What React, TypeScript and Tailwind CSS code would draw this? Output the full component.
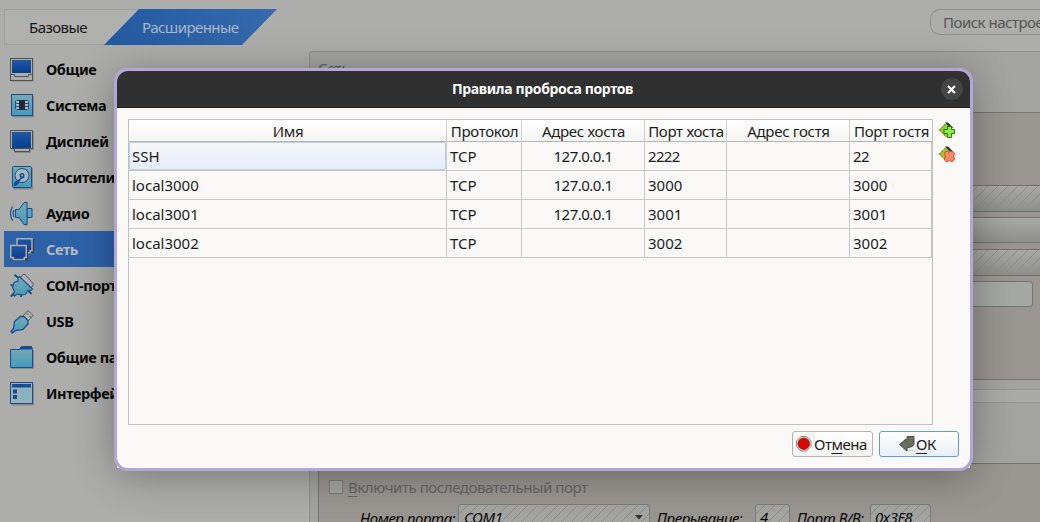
import type { ReactNode } from 'react';

const NAVY = '#174c92';
const SKY = '#58a6bd';

const icons: Record<string, ReactNode> = {
  general: (
    <>
      <rect x="1.5" y="1.5" width="22" height="22" fill="#6f7373" opacity=".6" />
      <rect x=".5" y=".5" width="22" height="22" fill="#adadab" stroke="#4f5252" />
      <rect x="2" y="2" width="19" height="13" fill="url(#screen)" />
      <path d="M1 16.5h3.5v2h14v-2H22" fill="none" stroke="#4f5252" />
    </>
  ),
  system: (
    <>
      <rect x="2.5" y="2" width="21.5" height="21.5" fill="#777b7a" opacity=".7" />
      <rect x="1.5" y=".5" width="21" height="21" fill="url(#sky)" stroke={NAVY} />
      <rect x="5.5" y="6.500" width="13" height="9" rx="1" fill="#adb9bc" stroke={NAVY} />
      <path d="M5 9.500h14M5 12.500h14" stroke={NAVY} />
      <rect x="9" y="6" width="6" height="10" fill="#232834" />
    </>
  ),
  display: (
    <>
      <path d="M1.500 1.500h22.500v18.500h-3v3h-16v-3h-3.500z" fill="#6f7373" opacity=".6" />
      <path d="M.5.5h22v18h-3v3h-15v-3h-4z" fill="#adadab" stroke="#4f5252" />
      <rect x="2" y="2" width="19" height="16" fill="url(#screen)" />
      <path d="M4.500 18.500h15" stroke="#4f5252" />
    </>
  ),
  storage: (
    <>
      <rect x="3.500" y="2" width="19.500" height="21.500" fill="#777b7a" opacity=".7" />
      <rect x="2.500" y=".5" width="19" height="21" rx="1" fill="url(#sky)" stroke={NAVY} />
      <circle cx="12" cy="9.500" r="7" fill="#a6b8bd" stroke={NAVY} />
      <path d="M13 9l1.500 2.500-4 2-2.500 5-3.500 2-1-1.500 1.500-3.500 5-3z" fill={NAVY} />
      <circle cx="12" cy="9.500" r="2.500" fill={NAVY} />
      <circle cx="12" cy="9.500" r="1" fill="#a6b8bd" />
    </>
  ),
  audio: (
    <>
      <path d="M7 7.500l8-7h2v22h-2l-8-7z" transform="translate(1 1)" fill="#777b7a" opacity=".6" />
      <path d="M17 6.500h5v9h-5z" fill={SKY} stroke={NAVY} />
      <path d="M5.500 7.500h3.500l5-7h3v22h-3l-5-7h-3.500z" fill="url(#sky)" stroke={NAVY} />
      <path d="M4 8q-1.500 3.500 0 7M2.500 4.500q-4 7 0 14" fill="none" stroke={NAVY} strokeWidth="1.200" />
    </>
  ),
  network: (
    <>
      <rect x="8.500" y="1" width="15.500" height="14" fill="#333d4a" />
      <path d="M7 .8h15v12h-2v2h-13z" fill="url(#screen)" stroke="#adadab" strokeWidth="1.500" />
      <rect x="2" y="8.500" width="16" height="14" fill="#333d4a" />
      <path d="M.8 7.500h15.500v12h-2v2h-11v-2h-2.500z" fill="url(#screen)" stroke="#adadab" strokeWidth="1.500" />
    </>
  ),
  serial: (
    <>
      <path d="M10 4l3-3.500h2l8 9v2l-3 3.500z" fill="#b3b5b5" stroke="#555" />
      <path d="M8 3.500l1.500-1 13 12.500-1.500 1.500-3-.5-2.500 4.500-4 .5-4-1-3 2-1.500-1.500 1.500-3-2-4 1.500-5 4-1.500z" fill="url(#sky)" stroke={NAVY} strokeWidth="1.100" />
      <path d="M4.500 .8l3.500 3M.5 10.500l3 1.500M11 20v3M18.500 17l3 3M.8 22.500l3-3" stroke={NAVY} strokeWidth="1.800" />
    </>
  ),
  usb: (
    <>
      <path d="M13 6l5-5.500 5 5-5 5.500z" fill="#b3b5b5" stroke="#555" />
      <path d="M17 3.500l1.500 1.500M19.500 6l1.500 1.500" stroke="#333" />
      <path d="M10.500 6.500h3.500l4 4v3.500l-5 5.500-7.500 1-3 2.500-1.500-1.500 2.500-3 1-7z" fill="url(#sky)" stroke={NAVY} strokeWidth="1.300" />
    </>
  ),
  folder: (
    <>
      <rect x="1.500" y="4" width="22.500" height="19" fill="#777b7a" opacity=".7" />
      <path d="M.5 3.500h9l2-3h10l1 3v18H.5z" fill="url(#sky)" stroke={NAVY} />
      <path d="M9 3.500l2-3h11v3z" fill={NAVY} />
    </>
  ),
  ui: (
    <>
      <rect x="1.500" y="2" width="22.500" height="21.500" fill="#777b7a" opacity=".7" />
      <rect x=".5" y=".5" width="22" height="21" fill="#9fb0b5" stroke={NAVY} />
      <rect x="2" y="2" width="19" height="3.500" fill={NAVY} />
      <rect x="3" y="7.500" width="4" height="4" fill={NAVY} />
      <rect x="3" y="13" width="4" height="4" fill={NAVY} />
      <rect x="10" y="7" width="11" height="12" fill="#86b4bf" />
    </>
  ),
};

const pages = [
  { icon: 'general', label: 'Общие' },
  { icon: 'system', label: 'Система' },
  { icon: 'display', label: 'Дисплей' },
  { icon: 'storage', label: 'Носители' },
  { icon: 'audio', label: 'Аудио' },
  { icon: 'network', label: 'Сеть', active: true },
  { icon: 'serial', label: 'COM-порты' },
  { icon: 'usb', label: 'USB' },
  { icon: 'folder', label: 'Общие папки' },
  { icon: 'ui', label: 'Интерфейс' },
];

const columns = ['Имя', 'Протокол', 'Адрес хоста', 'Порт хоста', 'Адрес гостя', 'Порт гостя'];

const rules = [
  ['SSH', 'TCP', '127.0.0.1', '2222', '', '22'],
  ['local3000', 'TCP', '127.0.0.1', '3000', '', '3000'],
  ['local3001', 'TCP', '127.0.0.1', '3001', '', '3001'],
  ['local3002', 'TCP', '', '3002', '', '3002'],
];

const GRID = 'grid grid-cols-[318px_75px_123px_82px_123px_82px]';
const HATCH =
  'border-y border-[#737370] bg-[repeating-linear-gradient(135deg,transparent_0px,transparent_6.07px,#8e8e8a_6.07px,#8e8e8a_7.07px),linear-gradient(#a9a9a6,#8e8e8a)]';
const HATCH_FIELD =
  'rounded-[3px] border border-[#7b7b78] bg-[repeating-linear-gradient(135deg,transparent_0px,transparent_6.07px,#8e8e8a_6.07px,#8e8e8a_7.07px),linear-gradient(#a4a5a2,#a4a5a2)]';

function Defs() {
  return (
    <svg width="0" height="0" className="absolute">
      <defs>
        <linearGradient id="screen" x1="0" y1="0" x2="0" y2="1">
          <stop offset="0" stopColor="#2058a5" />
          <stop offset="1" stopColor="#063f8b" />
        </linearGradient>
        <linearGradient id="sky" x1="0" y1="0" x2="0" y2="1">
          <stop offset="0" stopColor="#78a9b5" />
          <stop offset="1" stopColor="#449bb8" />
        </linearGradient>
      </defs>
    </svg>
  );
}

function Sidebar() {
  return (
    <nav className="mt-1.5 ml-1 flex w-[290px] flex-col">
      {pages.map((p) => (
        <div
          key={p.label}
          className={`flex h-9 items-center gap-3 pt-0.5 pl-1.5 text-[14.5px] font-bold tracking-[-0.4px] ${
            p.active ? 'bg-[#2d62a9] text-[#b5b9c0]' : 'text-[#080808]'
          }`}
        >
          <svg width="24" height="24" viewBox="0 0 24 24" className="shrink-0">
            {icons[p.icon]}
          </svg>
          <span>{p.label}</span>
        </div>
      ))}
    </nav>
  );
}

function SettingsPane() {
  return (
    <div className="mt-1.5 flex h-[480px] flex-1 flex-col rounded-tl-[4px] border-t border-l border-[#8f8f8d] bg-[#a3a3a1] pl-2 tracking-[-0.43px]">
      <div className="h-[60px] pt-[5px] text-[15px] text-[#5e5e5c]">Сеть</div>
      <div className="flex h-[268px] flex-col border-t border-l border-[#737371] bg-[#999590] pt-[72px]">
        <div className={`h-[27px] ${HATCH}`} />
        <div className="mt-[5px] h-[26px] border-y border-[#737370] bg-linear-to-b from-[#a9a9a6] to-[#8e8e8a]" />
        <div className={`mt-1.5 h-[27px] ${HATCH}`} />
        <div className="mt-[5px] mr-[7px] h-[26px] rounded-[3px] border border-[#747472] bg-[#a5a7a5]" />
      </div>
      <div className="h-[10px] border-t border-[#737371]" />
      <div className="h-[14px] border-y border-[#939391] bg-[#aaaaa8]" />
      <div className="h-[60px]" />
      <div className="flex flex-1 flex-col border-t border-l border-[#737371] bg-[#999590] text-[15px]">
        <div className="mt-[13px] ml-[10px] flex h-[20px] items-center gap-[5px] text-[#656764]">
          <span className="size-[14px] border border-[#80817e] bg-[#a4a6a3]" />
          <span>
            <span className="underline underline-offset-[3px]">В</span>ключить последовательный порт
          </span>
        </div>
        <div className="mt-[7px] flex h-[27px] whitespace-nowrap text-[#080808] italic">
          <span className="ml-[41px] w-[98px] pt-[3px]">Номер порта:</span>
          <span className={`flex w-[192px] items-center justify-between pr-[6px] pl-[5px] ${HATCH_FIELD}`}>
            COM1
            <svg width="8" height="5" viewBox="0 0 8 5">
              <path d="M0 0h8L4 4.500z" fill="#333" />
            </svg>
          </span>
          <span className="ml-[7px] w-[98px] pt-[3px]">Прерывание:</span>
          <span className={`flex w-[35px] items-center pl-[4px] ${HATCH_FIELD}`}>4</span>
          <span className="ml-[7px] w-[73px] pt-[3px]">Порт В/В:</span>
          <span className={`flex w-[61px] items-center pl-[4px] ${HATCH_FIELD}`}>0x3F8</span>
        </div>
      </div>
    </div>
  );
}

function RuleIcon({ kind }: { kind: 'add' | 'remove' }) {
  return (
    <svg width="16" height="16" viewBox="0 0 16 16">
      <path d="M0 8L7 1l6 5-5 9H7z" fill="#7ddc2b" />
      <path d="M.5 8l6.500-6.500M.5 8l7 7" fill="none" stroke="#ee5a26" strokeWidth="1.200" strokeDasharray="2 1" />
      <path d="M6 .5h3l5 5-2 1.500z" fill="#2e3434" />
      {kind === 'add' ? (
        <path d="M8.500 4.500h4v3h3v4h-3v4h-4v-4h-3.500v-4h3.500z" fill="#91ec42" stroke="#247c08" />
      ) : (
        <path
          d="M6.500 5.500h2l1.500 1 1.500-1h2l2 1.500-1 3 1 3-2 2.500h-1.500l-1.500-1.500-1.500 1.500h-2l-1.500-2 1-3-1-3z"
          fill="#ff8a63"
          stroke="#e04520"
        />
      )}
    </svg>
  );
}

function RulesTable() {
  return (
    <div className="h-[306px] w-[805px] border border-[#c0c0be]">
      <div className={`${GRID} h-[22px] border-b border-[#b4b5b1] bg-linear-to-b from-white to-[#f5f5f3] leading-[21px] tracking-[-0.3px]`}>
        {columns.map((c, i) => (
          <div
            key={c}
            className={`pt-px pl-px text-center whitespace-nowrap ${i < 5 ? 'border-r border-[#cfcfcd]' : ''}`}
          >
            {c}
          </div>
        ))}
      </div>
      {rules.map((r, y) => (
        <div key={r[0]} className={`${GRID} h-[29px]`}>
          {r.map((v, x) => (
            <div key={x} className="border-r border-b border-[#c9c9c8]">
              <div
                className={`flex h-full items-center border ${
                  x === 0 && y === 0
                    ? 'rounded-[2px] border-[#b9cfe8] bg-linear-to-b from-[#f5f7f9] to-[#e6edf8]'
                    : 'border-transparent'
                } ${x === 2 ? 'justify-center tracking-[-0.5px]' : 'pl-0.5'} ${/^2+$/.test(v) ? 'tracking-[-0.7px]' : ''}`}
              >
                {v}
              </div>
            </div>
          ))}
        </div>
      ))}
    </div>
  );
}

function RulesDialog() {
  return (
    <div className="absolute top-[68px] left-[114px] h-[403px] w-[859px]">
      <span className="absolute bottom-[3px] left-[3px] size-2 bg-white" />
      <span className="absolute right-[3px] bottom-[3px] size-2 bg-white" />
      <div className="relative flex h-full flex-col overflow-hidden rounded-[14px] border-[3px] border-[#b3a5d7] bg-[#faf9f8] text-[15px] text-[#1b1b1b]">
        <header className="grid h-[37px] shrink-0 grid-cols-[40px_1fr_40px] items-center border-b border-[#1e1e1e] bg-[#303030] text-white">
          <span />
          <h1 className="pr-0.5 pb-0.5 text-center text-[14px] font-bold tracking-[-0.35px]">
            Правила проброса портов
          </h1>
          <button className="ml-[11px] flex size-[22px] items-center justify-center rounded-full bg-[#454545] pr-px">
            <svg width="9" height="9" viewBox="0 0 9 9">
              <path d="M1 1l7 7M8 1L1 8" stroke="white" strokeWidth="2.200" />
            </svg>
          </button>
        </header>
        <div className="mt-[11px] ml-[11px] flex gap-1.5">
          <RulesTable />
          <div className="flex flex-col gap-2 pt-[3px]">
            <RuleIcon kind="add" />
            <RuleIcon kind="remove" />
          </div>
        </div>
        <footer className="mt-1.5 mr-[11px] flex justify-end gap-1.5 tracking-[-0.5px]">
          <button className="flex h-[26px] w-[81px] items-center gap-[2px] rounded-[3px] border border-[#b5b5b4] bg-linear-to-b from-white to-[#f4f4f3] pl-[3px]">
            <svg width="16" height="16" viewBox="0 0 16 16" className="shrink-0">
              <path d="M5 .5h5.500l4.500 4.500v5.500L10.500 15H5L.5 10.500V5z" fill="#e5e5e2" stroke="#888a85" />
              <circle cx="7.750" cy="7.750" r="5.800" fill="#d50909" stroke="#a50000" strokeWidth=".7" />
            </svg>
            <span>
              От<span className="underline underline-offset-[3px]">м</span>ена
            </span>
          </button>
          <button className="flex h-[26px] w-[80px] items-center justify-center gap-px rounded-[3px] border border-[#5a9ee6] bg-linear-to-b from-white to-[#e9eff6] pr-[3px]">
            <svg width="16" height="16" viewBox="0 0 16 16">
              <ellipse cx="9" cy="14" rx="6" ry="1.500" fill="#d8dcd8" />
              <path d="M8 .5h7v7.500q-1 3.500-7 3.500v3.500L.5 8.500l6.500-5.500v2.500h1z" fill="#64735a" stroke="#46523f" />
            </svg>
            <span>
              <span className="underline underline-offset-[3px]">О</span>К
            </span>
          </button>
        </footer>
      </div>
      <div className="pointer-events-none absolute inset-0 -z-10 rounded-[14px] shadow-[0_5px_40px_rgba(0,0,0,0.32)]" />
    </div>
  );
}

export default function App() {
  return (
    <div className="relative isolate h-[522px] w-[1040px] overflow-hidden bg-[#adadab] font-['Noto_Sans','Liberation_Sans',sans-serif]">
      <Defs />
      <div className="relative -z-20 h-full">
        <div className="flex h-[45px] items-start justify-between pt-[9px] pl-1 text-[15px]">
          <div className="flex h-9 tracking-[-0.55px]">
            <div className="flex w-[136px] items-center border border-r-0 border-[#a0a09e] bg-[#b0b0ae] pl-6 text-[#161616]">
              <span>Базовые</span>
            </div>
            <div className="-ml-9 flex w-[173px] items-center bg-linear-to-r from-[#235a9f] to-[#356aaf] pl-[38px] text-[#abb7c6] [clip-path:polygon(35px_0,100%_0,138px_100%,0_100%)]">
              Расширенные
            </div>
          </div>
          <div className="flex h-[26px] w-[110px] items-center rounded-l-[10px] border border-r-0 border-[#929290] bg-[#adadab] pl-3 tracking-[-0.5px] whitespace-nowrap text-[#555653]">
            Поиск настроек
          </div>
        </div>
        <div className="flex">
          <Sidebar />
          <div className="w-[15px]" />
          <SettingsPane />
        </div>
      </div>
      <RulesDialog />
    </div>
  );
}
